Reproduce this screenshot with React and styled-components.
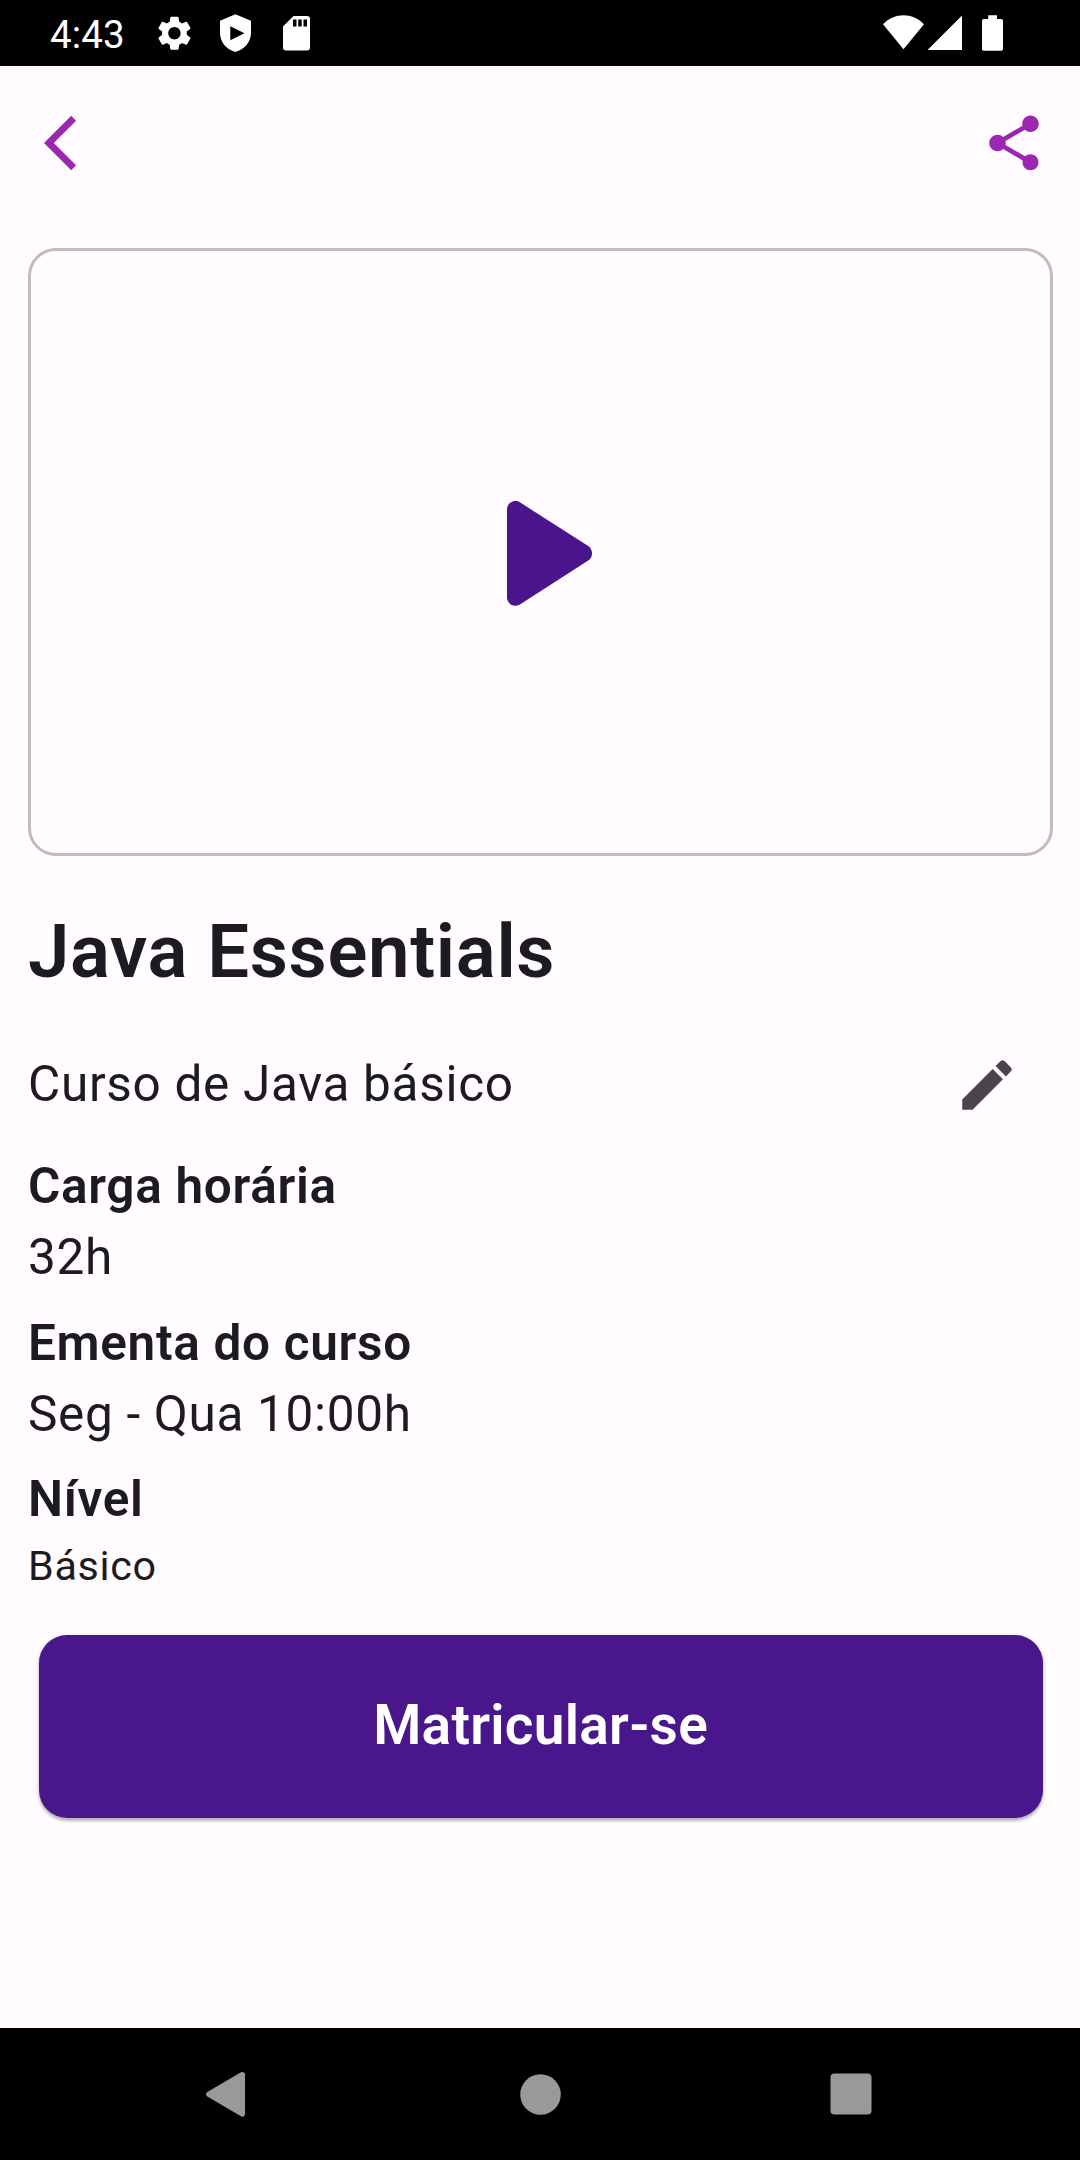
import React from "react";
import styled, { createGlobalStyle } from "styled-components";

const GlobalStyle = createGlobalStyle`
  *, *::before, *::after { box-sizing: border-box; }
  body { margin: 0; background: #fffbff; }
  svg { display: block; flex: none; }
`;

const Screen = styled.div`
  width: 1080px;
  height: 2160px;
  display: flex;
  flex-direction: column;
  background: #fffbff;
  color: #1c1b1f;
  font-family: Roboto, "Liberation Sans", sans-serif;
  overflow: hidden;
`;

const StatusBar = styled.header`
  flex: none;
  height: 66px;
  padding: 0 77px 0 50px;
  display: flex;
  align-items: center;
  justify-content: space-between;
  background: #000;
  color: #fff;
`;

const StatusGroup = styled.div`
  display: flex;
  align-items: center;
`;

const Clock = styled.span`
  width: 105px;
  padding-top: 3px;
  font-size: 38.5px;
  line-height: 63px;
  letter-spacing: 0.1px;
`;

const AppBar = styled.nav`
  flex: none;
  height: 154px;
  padding: 0 33px 0 44px;
  display: flex;
  align-items: center;
  justify-content: space-between;
  color: #9c27b0;
`;

const IconButton = styled.button`
  width: ${(p) => p.$size}px;
  height: ${(p) => p.$size}px;
  padding: 0;
  border: 0;
  background: none;
  color: inherit;
  display: flex;
  align-items: center;
  justify-content: center;
`;

const Content = styled.main`
  flex: 1;
  padding: 28px 27px 0 28px;
  display: flex;
  flex-direction: column;
`;

const VideoFrame = styled.section`
  height: 608px;
  border: 3px solid #bdbdbd;
  border-radius: 28px;
  display: flex;
  align-items: center;
  justify-content: center;
  padding: 2px 0 0 18px;
`;

const Title = styled.h1`
  margin: 43px 0 13.5px;
  font-size: 74.25px;
  font-weight: 600;
  line-height: 106px;
  letter-spacing: 0.6875px;
`;

const DescriptionRow = styled.div`
  height: 132px;
  margin-bottom: 0.5px;
  display: flex;
  align-items: center;
  justify-content: space-between;
  color: #49454f;
`;

const Section = styled.section`
  margin-bottom: ${(p) => p.$gap ?? 15}px;
`;

const Label = styled.h2`
  margin: 0;
  font-size: 49.5px;
  font-weight: 600;
  line-height: 71px;
  letter-spacing: 0.6875px;
`;

const Value = styled.p`
  margin: 0;
  color: #1c1b1f;
  font-size: ${(p) => (p.$small ? 41.25 : 49.5)}px;
  line-height: ${(p) => (p.$small ? 62 : 71)}px;
  letter-spacing: 0.6875px;
`;

const EnrollButton = styled.button`
  margin: 22.5px 10.3px 0 10.5px;
  height: 183px;
  padding: 0 0 2px;
  border: 0;
  border-radius: 28px;
  background: #4a168b;
  color: #fff;
  font: 600 55px/78px Roboto, "Liberation Sans", sans-serif;
  letter-spacing: 0.275px;
  box-shadow: 0 3px 3px rgba(0, 0, 0, 0.22), 0 1px 5px rgba(0, 0, 0, 0.14);
`;

const NavBar = styled.footer`
  flex: none;
  height: 132px;
  padding: 0 186px 0 179px;
  display: flex;
  align-items: center;
  justify-content: space-between;
  background: #000;
  color: #999;
`;

const StatusIcons = () => (
  <svg width="165" height="66" viewBox="155 0 165 66" fill="#fff">
    <g transform="translate(153.8 12.6) scale(1.72)">
      <path d="M19.14 12.94c.04-.3.06-.61.06-.94 0-.32-.02-.64-.07-.94l2.03-1.58c.18-.14.23-.41.12-.61l-1.92-3.32c-.12-.22-.37-.29-.59-.22l-2.39.96c-.5-.38-1.03-.7-1.62-.94l-.36-2.54c-.04-.24-.24-.41-.48-.41h-3.84c-.24 0-.43.17-.47.41l-.36 2.54c-.59.24-1.13.57-1.62.94l-2.39-.96c-.22-.08-.47 0-.59.22L2.74 8.87c-.12.21-.08.47.12.61l2.03 1.58c-.05.3-.09.63-.09.94s.02.64.07.94l-2.03 1.58c-.18.14-.23.41-.12.61l1.92 3.32c.12.22.37.29.59.22l2.39-.96c.5.38 1.03.7 1.62.94l.36 2.54c.05.24.24.41.48.41h3.84c.24 0 .44-.17.47-.41l.36-2.54c.59-.24 1.13-.56 1.62-.94l2.39.96c.22.08.47 0 .59-.22l1.92-3.32c.12-.22.07-.47-.12-.61l-2.01-1.58zM12 15.6c-1.98 0-3.6-1.62-3.6-3.6s1.62-3.6 3.6-3.6 3.6 1.62 3.6 3.6-1.62 3.6-3.6 3.6z" />
    </g>
    <path
      fillRule="evenodd"
      d="M235.4 14.3L251 20.7V32.5C251 42 244.5 49.6 235.4 52C226.3 49.6 220 42 220 32.5V20.7ZM230.3 26.3V40.3L244.5 33.3Z"
    />
    <path
      fillRule="evenodd"
      d="M293.5 16H307a3 3 0 0 1 3 3V47.5a3 3 0 0 1-3 3H286a3 3 0 0 1-3-3V26.5ZM293 19.5V26.5H296.5V19.5ZM298.2 19.5V26.5H301.7V19.5ZM303.5 19.5V26.5H307V19.5Z"
    />
  </svg>
);

const SignalIcons = () => (
  <svg width="120" height="66" viewBox="883 0 120 66" fill="#fff">
    <path d="M903.5 49.3L883 24.2C894.5 12.2 912.5 12.2 924 24.2Z" />
    <path d="M962 15.5V50H927.5Z" />
    <path d="M988.2 15.2H997V19H1001.3a1.7 1.7 0 0 1 1.7 1.7V49a1.7 1.7 0 0 1-1.7 1.7H983.7A1.7 1.7 0 0 1 982 49V20.7A1.7 1.7 0 0 1 983.7 19H988.2Z" />
  </svg>
);

const MaterialIcon = ({ d, size = 66 }) => (
  <svg width={size} height={size} viewBox="0 0 24 24" fill="currentColor">
    <path d={d} />
  </svg>
);

const BACK = "M11.67 3.87L9.9 2.1 0 12l9.9 9.9 1.77-1.77L3.54 12z";
const SHARE =
  "M18 16.08c-.76 0-1.44.3-1.96.77L8.91 12.7c.05-.23.09-.46.09-.7s-.04-.47-.09-.7l7.05-4.11c.54.5 1.25.81 2.04.81 1.66 0 3-1.34 3-3s-1.34-3-3-3-3 1.34-3 3c0 .24.04.47.09.7L8.04 9.81C7.5 9.31 6.79 9 6 9c-1.66 0-3 1.34-3 3s1.34 3 3 3c.79 0 1.5-.31 2.04-.81l7.12 4.16c-.05.21-.08.43-.08.65 0 1.61 1.31 2.92 2.92 2.92s2.92-1.31 2.92-2.92-1.31-2.92-2.92-2.92z";
const EDIT =
  "M3 17.25V21h3.75L17.81 9.94l-3.75-3.75L3 17.25zM20.71 7.04c.39-.39.39-1.02 0-1.41l-2.34-2.34c-.39-.39-1.02-.39-1.41 0l-1.83 1.83 3.75 3.75 1.83-1.83z";

const PlayIcon = () => (
  <svg width="85" height="105" viewBox="0 0 85 105" fill="#4a148c">
    <path d="M0 8.5C0 1.5 7.4-2.1 13.3 1.6L81.2 44.9C86.3 48.2 86.3 56.3 81.2 59.6L13.3 103.2C7.4 106.9 0 103.3 0 96.3Z" />
  </svg>
);

const App = () => (
  <Screen>
    <GlobalStyle />
    <StatusBar>
      <StatusGroup>
        <Clock>4:43</Clock>
        <StatusIcons />
      </StatusGroup>
      <SignalIcons />
    </StatusBar>
    <AppBar>
      <IconButton $size={66} aria-label="Voltar">
        <MaterialIcon d={BACK} />
      </IconButton>
      <IconButton $size={66} aria-label="Compartilhar">
        <MaterialIcon d={SHARE} />
      </IconButton>
    </AppBar>
    <Content>
      <VideoFrame>
        <PlayIcon />
      </VideoFrame>
      <Title>Java Essentials</Title>
      <DescriptionRow>
        <Value>Curso de Java básico</Value>
        <IconButton $size={132} aria-label="Editar">
          <MaterialIcon d={EDIT} />
        </IconButton>
      </DescriptionRow>
      <Section>
        <Label>Carga horária</Label>
        <Value>32h</Value>
      </Section>
      <Section $gap={14}>
        <Label>Ementa do curso</Label>
        <Value>Seg - Qua 10:00h</Value>
      </Section>
      <Section>
        <Label>Nível</Label>
        <Value $small>Básico</Value>
      </Section>
      <EnrollButton>Matricular-se</EnrollButton>
    </Content>
    <NavBar>
      <IconButton $size={94} aria-label="Voltar">
        <svg width="40" height="46" viewBox="0 0 40 46" fill="currentColor">
          <path d="M34.5 1.6C36.5.2 39 1.2 39 3.600V43C39 45.4 36.5 46.4 34.5 45L1.3 25.5C-.4 24.400-.4 22.2 1.3 21.100Z" />
        </svg>
      </IconButton>
      <IconButton $size={94} aria-label="Início">
        <svg width="41" height="41" viewBox="0 0 41 41" fill="currentColor">
          <circle cx="20.5" cy="20.5" r="20.3" />
        </svg>
      </IconButton>
      <IconButton $size={87} aria-label="Recentes">
        <svg width="42" height="42" viewBox="0 0 42 42" fill="currentColor">
          <rect x=".5" y=".5" width="41" height="41" rx="4" />
        </svg>
      </IconButton>
    </NavBar>
  </Screen>
);

export default App;
